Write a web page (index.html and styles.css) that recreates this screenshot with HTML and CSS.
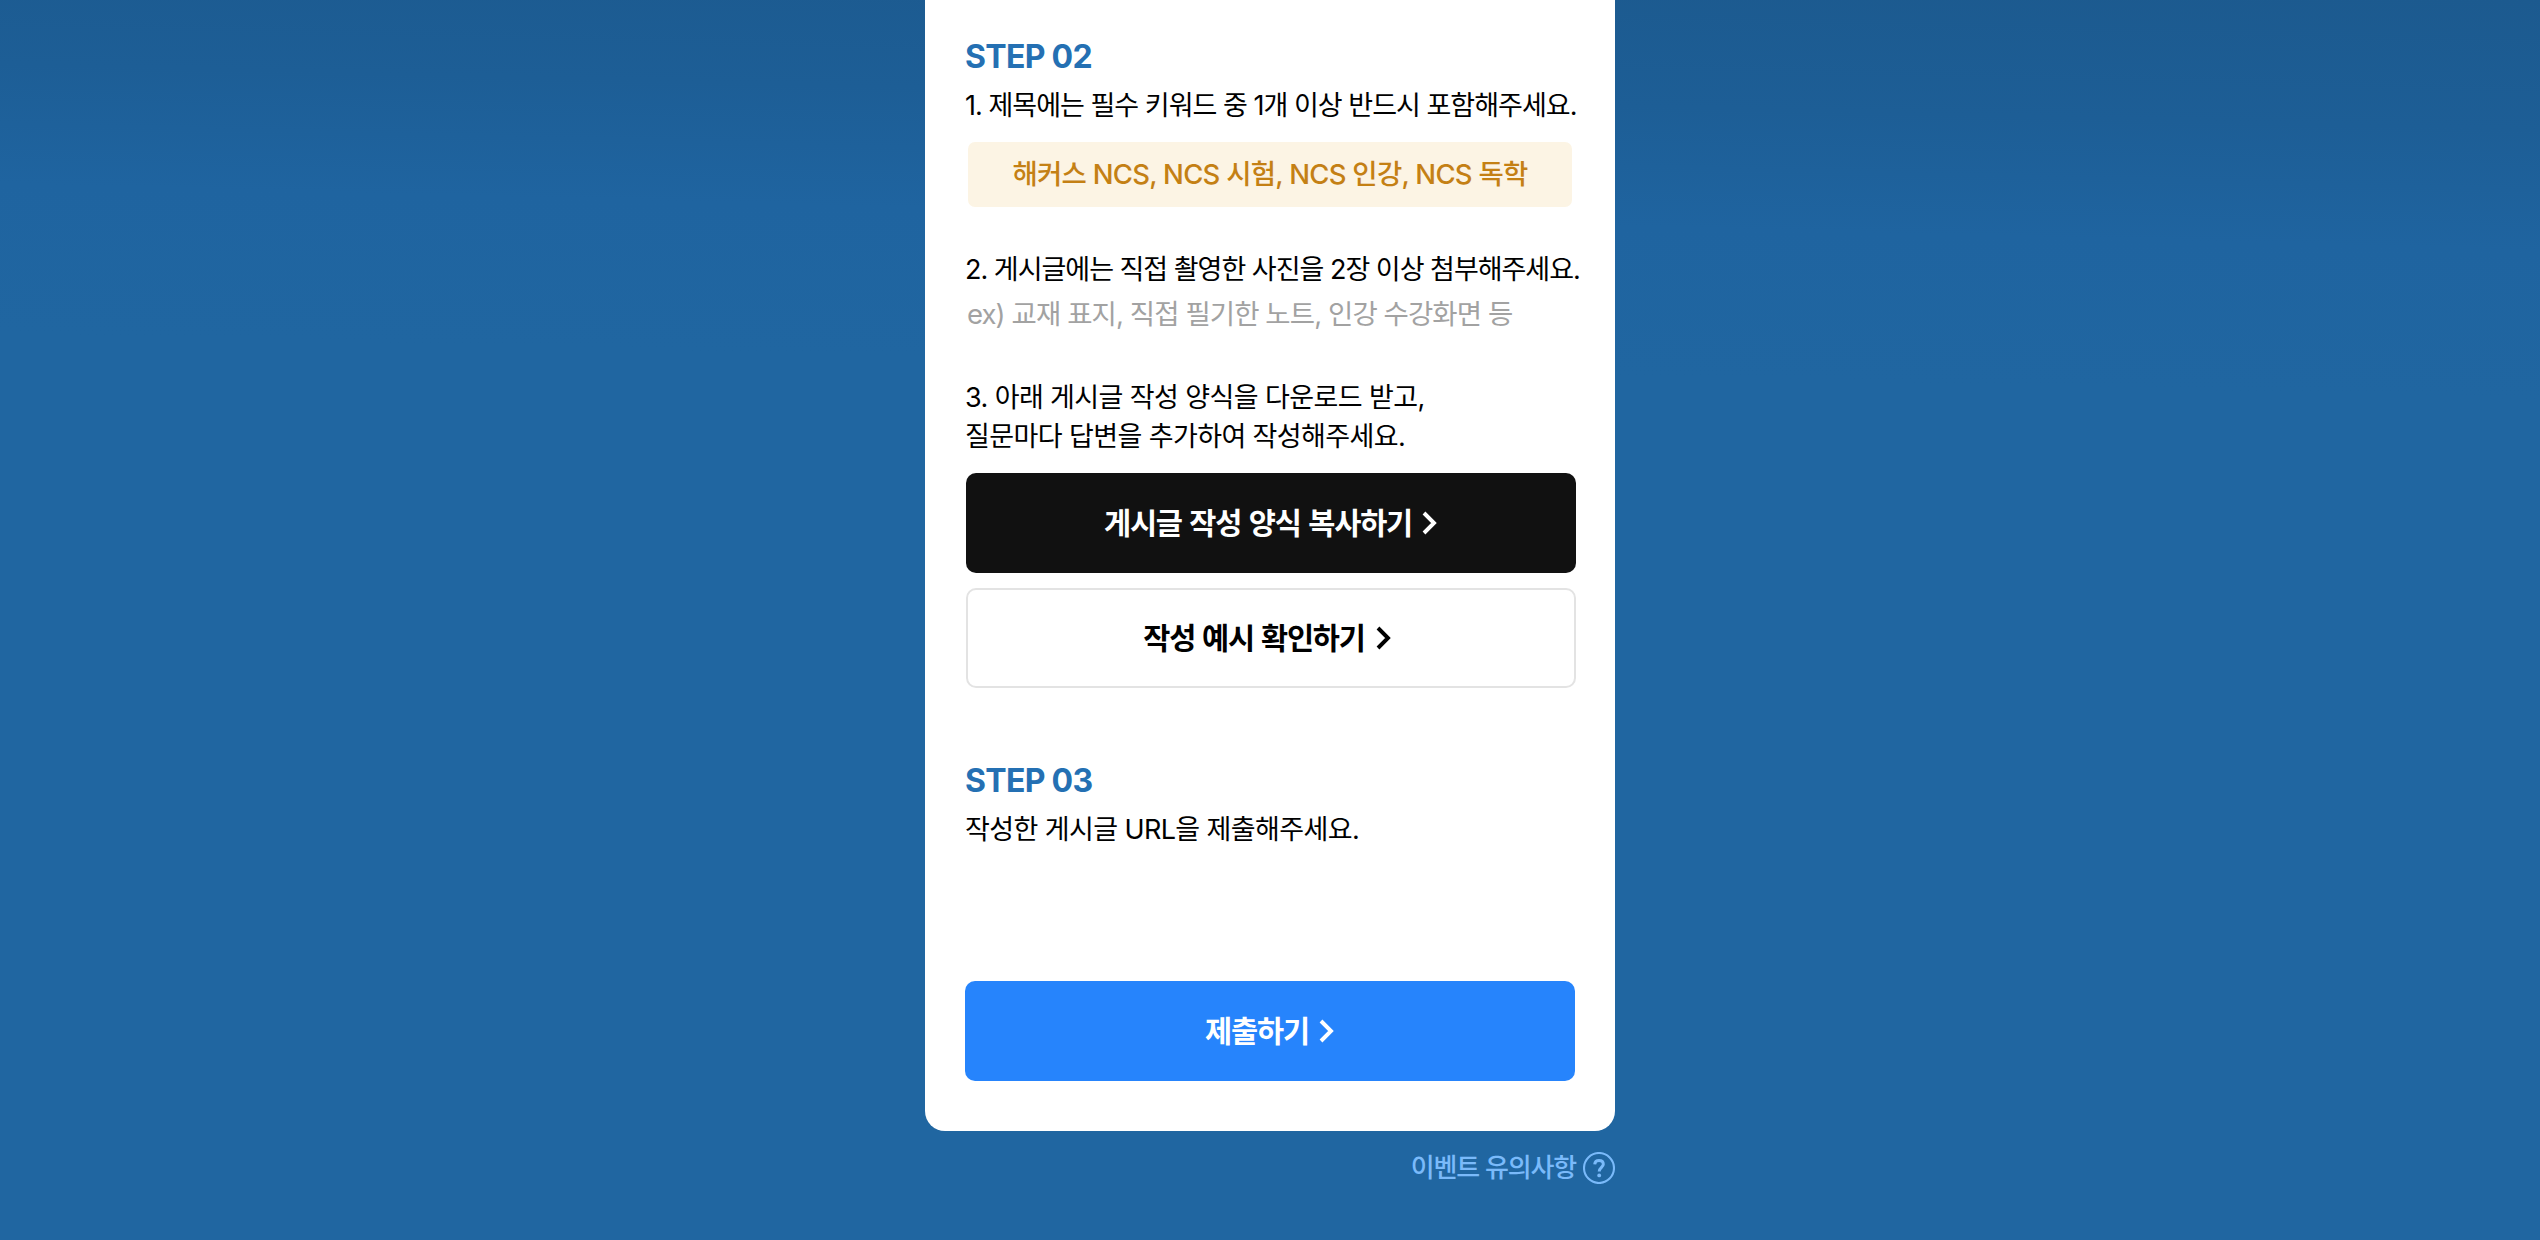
FILE: index.html
```html
<!DOCTYPE html>
<html lang="ko">
<head>
<meta charset="utf-8">
<title>게시글 작성 이벤트</title>
<link rel="stylesheet" href="styles.css">
</head>
<body>
<main class="event">
  <section class="card">
    <h2 class="step">STEP 02</h2>
    <p class="text text-tight">1. 제목에는 필수 키워드 중 1개 이상 반드시 포함해주세요.</p>
    <div class="keywords">해커스 NCS, NCS 시험, NCS 인강, NCS 독학</div>
    <p class="text text-tight photo">2. 게시글에는 직접 촬영한 사진을 2장 이상 첨부해주세요.</p>
    <p class="text example">ex) 교재 표지, 직접 필기한 노트, 인강 수강화면 등</p>
    <p class="text form-guide">3. 아래 게시글 작성 양식을 다운로드 받고,<br>질문마다 답변을 추가하여 작성해주세요.</p>
    <div class="actions">
      <a class="btn btn-dark"><span>게시글 작성 양식 복사하기</span><svg class="chevron" viewBox="0 0 16 24"><path d="M2 2L12 12L2 22"/></svg></a>
      <a class="btn btn-line"><span>작성 예시 확인하기</span><svg class="chevron" viewBox="0 0 16 24"><path d="M2 2L12 12L2 22"/></svg></a>
    </div>
    <h2 class="step step-last">STEP 03</h2>
    <p class="text">작성한 게시글 URL을 제출해주세요.</p>
    <a class="btn btn-submit"><span>제출하기</span><svg class="chevron" viewBox="0 0 16 24"><path d="M2 2L12 12L2 22"/></svg></a>
  </section>
  <a class="notice"><span>이벤트 유의사항</span><svg class="help" viewBox="0 0 32 32"><circle cx="16" cy="16" r="15"/><path d="M11.7 12.3C11.9 9.9 13.6 8.5 16 8.5C18.6 8.5 20.3 10 20.3 12.2C20.3 15.3 16.2 15.4 16.2 19.6"/><circle class="dot" cx="16.2" cy="23.4" r="1.9"/></svg></a>
</main>
</body>
</html>
```

FILE: styles.css
```css
* { box-sizing: border-box; }

body {
  margin: 0;
  min-height: 1240px;
  background: #2066a1 linear-gradient(181.5deg, #1c5a8f 0, #1d5e96 130px, #1f64a0 250px, #2066a1 400px);
  font-family: Inter, "Noto Sans CJK KR", sans-serif;
  color: #000;
}

.event {
  width: 690px;
  margin-left: 925px;
}

.card {
  padding: 35px 39px 50px 40px;
  background: #fff;
  border-radius: 0 0 20px 20px;
}

.step {
  margin: 0;
  font-size: 32px;
  font-weight: 700;
  line-height: 44px;
  letter-spacing: -0.7px;
  color: #2470b3;
}

.step-last { margin-top: 71px; }

.text {
  margin: 5px 0 0;
  font-size: 27px;
  line-height: 44px;
  letter-spacing: -0.6px;
  white-space: nowrap;
}

.text-tight { letter-spacing: -0.98px; }

.keywords {
  display: flex;
  align-items: center;
  justify-content: center;
  width: 604px;
  height: 65px;
  margin: 14px 0 0 3px;
  border-radius: 7px;
  background: #fcf4e4;
  color: #c48014;
  font-size: 27.5px;
  font-weight: 500;
  line-height: 65px;
  letter-spacing: -0.74px;
  white-space: nowrap;
}

.photo {
  margin-top: 41px;
  letter-spacing: -1.01px;
}

.example {
  margin: 0 0 0 2px;
  font-size: 27.5px;
  letter-spacing: -0.91px;
  color: #a2a2a2;
}

.form-guide {
  margin-top: 42px;
  line-height: 39px;
}

.actions {
  display: flex;
  flex-direction: column;
  gap: 15px;
  margin: 17px 0 0 1px;
}

.btn {
  display: flex;
  align-items: center;
  justify-content: center;
  gap: 10px;
  width: 610px;
  height: 100px;
  border-radius: 10px;
  font-size: 29.5px;
  font-weight: 700;
  line-height: 40px;
  letter-spacing: -1.2px;
  word-spacing: 1.8px;
}

.btn-dark {
  background: #111;
  color: #fff;
}

.btn-line {
  gap: 11px;
  padding-right: 7px;
  border: 2px solid #e3e3e3;
  word-spacing: 1.2px;
}

.btn-submit {
  margin-top: 129px;
  background: #2684fc;
  color: #fff;
}

.chevron {
  width: 16px;
  height: 24px;
  fill: none;
  stroke: currentColor;
  stroke-width: 3.9;
}

.notice {
  display: flex;
  align-items: center;
  justify-content: flex-end;
  gap: 7px;
  height: 32px;
  margin-top: 21px;
  color: #7abafa;
  font-size: 26px;
  font-weight: 500;
  line-height: 32px;
  letter-spacing: -1.15px;
}

.help {
  width: 32px;
  height: 32px;
  fill: none;
  stroke: currentColor;
  stroke-width: 2.1;
}

.help path { stroke-width: 3; }

.help .dot {
  fill: currentColor;
  stroke: none;
}
```
